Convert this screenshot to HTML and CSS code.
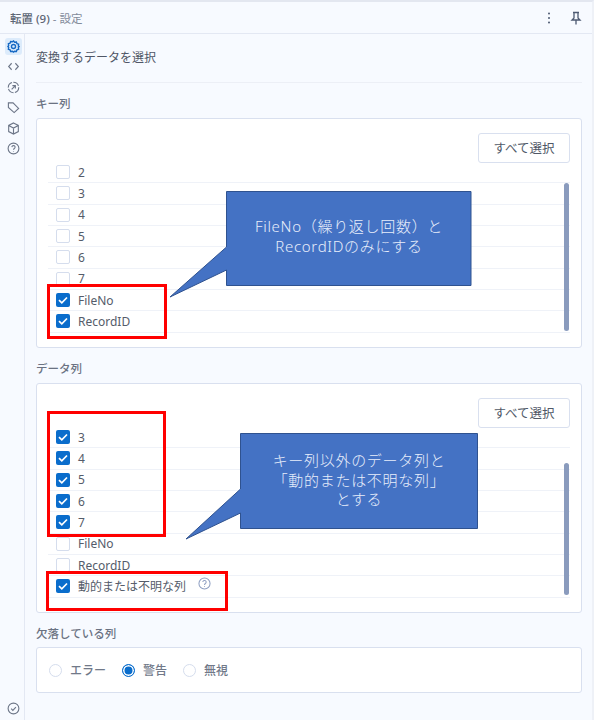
FILE: index.html
```html
<!DOCTYPE html>
<html lang="ja">
<head>
    <meta charset="UTF-8">
    <meta name="viewport" content="width=device-width, initial-scale=1.0">
    <title>転置 (9) - 設定</title>
    <link rel="stylesheet" href="styles.css">
</head>
<body>
    <div class="window">
        <header class="topbar">
            <div class="topbar-title"><span class="tool-name">転置 (9)</span> <span class="tool-sub">- 設定</span></div>
            <div class="topbar-actions">
                <svg class="icon" width="14" height="14" viewBox="0 0 14 14"><circle cx="7" cy="2.5" r="1"/><circle cx="7" cy="7" r="1"/><circle cx="7" cy="11.5" r="1"/></svg>
                <svg class="icon pin" width="14" height="14" viewBox="0 0 14 14"><path d="M4 1.5h6M5 1.5v5.5L3 9h8L9 7V1.5M7 9v4.5"/></svg>
            </div>
        </header>

        <div class="main">
            <nav class="rail">
                <div class="rail-top">
                    <span class="rail-item active">
                        <svg width="13" height="13" viewBox="0 0 14 14"><path d="M7 1l1.2 1.4 1.9-.3.6 1.8 1.8.6-.3 1.9L13 7l-.8 1.1.3 1.9-1.8.6-.6 1.8-1.9-.3L7 13l-1.2-.9-1.9.3-.6-1.8-1.8-.6.3-1.9L1 7l.8-1.1-.3-1.9 1.8-.6.6-1.8 1.9.3z"/><circle cx="7" cy="7" r="2.2"/></svg>
                    </span>
                    <span class="rail-item">
                        <svg width="13" height="13" viewBox="0 0 14 14"><path d="M5 3.5L1.8 7 5 10.500M9 3.500L12.200 7 9 10.500"/></svg>
                    </span>
                    <span class="rail-item">
                        <svg width="13" height="13" viewBox="0 0 14 14"><circle cx="7" cy="7" r="5.600" stroke-dasharray="7 1.500"/><path d="M5 9l4-4M5.800 5H9v3.200"/></svg>
                    </span>
                    <span class="rail-item">
                        <svg width="13" height="13" viewBox="0 0 14 14"><path d="M1.500 2h5l6 6-4.800 4.500L1.500 7z"/></svg>
                    </span>
                    <span class="rail-item">
                        <svg width="13" height="13" viewBox="0 0 14 14"><path d="M7 1l5.200 2.700v6.600L7 13l-5.200-2.700V3.700zM1.800 3.700L7 6.500l5.200-2.800M7 6.500V13"/></svg>
                    </span>
                    <span class="rail-item">
                        <svg width="13" height="13" viewBox="0 0 14 14"><circle cx="7" cy="7" r="5.800"/><path d="M5.300 5.500a1.700 1.700 0 1 1 2.600 1.500c-.6.400-.9.700-.9 1.400M7 10v.6"/></svg>
                    </span>
                </div>
                <span class="rail-item">
                    <svg width="13" height="13" viewBox="0 0 14 14"><circle cx="7" cy="7" r="5.800"/><path d="M4.500 7.200L6.300 9l3.300-3.600"/></svg>
                </span>
            </nav>

            <main class="content">
                <h1 class="page-title">変換するデータを選択</h1>

                <h2 class="section-label first">キー列</h2>
                <section class="panel">
                    <div class="panel-head"><button class="select-all">すべて選択</button></div>
                    <ul class="col-list">
                        <li class="col-row"><span class="check"></span>2</li>
                        <li class="col-row"><span class="check"></span>3</li>
                        <li class="col-row"><span class="check"></span>4</li>
                        <li class="col-row"><span class="check"></span>5</li>
                        <li class="col-row"><span class="check"></span>6</li>
                        <li class="col-row"><span class="check"></span>7</li>
                        <li class="col-row"><span class="check on"><svg width="14" height="14" viewBox="0 0 14 14"><path d="M3 7.200l2.800 2.600L11 4.500"/></svg></span>FileNo</li>
                        <li class="col-row"><span class="check on"><svg width="14" height="14" viewBox="0 0 14 14"><path d="M3 7.200l2.800 2.600L11 4.500"/></svg></span>RecordID</li>
                        <li class="scrollbar key-scroll"></li>
                    </ul>
                </section>

                <h2 class="section-label">データ列</h2>
                <section class="panel">
                    <div class="panel-head"><button class="select-all">すべて選択</button></div>
                    <ul class="col-list">
                        <li class="col-row"><span class="check on"><svg width="14" height="14" viewBox="0 0 14 14"><path d="M3 7.200l2.800 2.600L11 4.500"/></svg></span>3</li>
                        <li class="col-row"><span class="check on"><svg width="14" height="14" viewBox="0 0 14 14"><path d="M3 7.200l2.800 2.600L11 4.500"/></svg></span>4</li>
                        <li class="col-row"><span class="check on"><svg width="14" height="14" viewBox="0 0 14 14"><path d="M3 7.200l2.800 2.600L11 4.500"/></svg></span>5</li>
                        <li class="col-row"><span class="check on"><svg width="14" height="14" viewBox="0 0 14 14"><path d="M3 7.200l2.800 2.600L11 4.500"/></svg></span>6</li>
                        <li class="col-row"><span class="check on"><svg width="14" height="14" viewBox="0 0 14 14"><path d="M3 7.200l2.800 2.600L11 4.500"/></svg></span>7</li>
                        <li class="col-row"><span class="check"></span>FileNo</li>
                        <li class="col-row"><span class="check"></span>RecordID</li>
                        <li class="col-row"><span class="check on"><svg width="14" height="14" viewBox="0 0 14 14"><path d="M3 7.200l2.800 2.600L11 4.500"/></svg></span>動的または不明な列
                            <svg class="help" width="13" height="13" viewBox="0 0 14 14"><circle cx="7" cy="7" r="6"/><path d="M5.200 5.500a1.800 1.800 0 1 1 2.800 1.500c-.7.400-1 .8-1 1.500M7 10v.7"/></svg>
                        </li>
                        <li class="scrollbar data-scroll"></li>
                    </ul>
                </section>

                <h2 class="section-label missing">欠落している列</h2>
                <section class="panel radio-panel">
                    <label class="radio-item"><span class="radio"></span>エラー</label>
                    <label class="radio-item"><span class="radio on"></span>警告</label>
                    <label class="radio-item"><span class="radio"></span>無視</label>
                </section>
            </main>
        </div>

        <!-- annotations pasted over the screenshot -->
        <div class="red-box box-key"></div>
        <div class="red-box box-data"></div>
        <div class="red-box box-dynamic"></div>

        <svg class="callout-shape" width="594" height="720" viewBox="0 0 594 720">
            <path d="M226.500 191.500H471V285.500H226.500V270L170 297L226.500 247Z"/>
            <path d="M240.500 433.500H477.500V528.500H240.500V513L186 539L240.500 489Z"/>
        </svg>
        <div class="callout-text callout-key">FileNo（繰り返し回数）と<br>RecordIDのみにする</div>
        <div class="callout-text callout-data">キー列以外のデータ列と<br>「動的または不明な列」<br>とする</div>
    </div>
</body>
</html>
```

FILE: styles.css
```css
* {
    box-sizing: border-box;
}

body {
    margin: 0;
    background-color: #f7faff;
    font-family: "Noto Sans", "Noto Sans CJK JP", sans-serif;
    color: #525a6b;
}

.window {
    position: relative;
    width: 594px;
    height: 720px;
    overflow: hidden;
    border-top: 2px solid #e3e7f0;
    border-right: 2px solid #eef1f7;
    display: flex;
    flex-direction: column;
}

.topbar {
    height: 32px;
    flex: none;
    display: flex;
    align-items: center;
    justify-content: space-between;
    padding: 0 9px 0 10px;
    border-bottom: 1px solid #e3e8f3;
    font-size: 11.500px;
}

.tool-name {
    font-weight: 500;
    color: #5d6675;
}

.tool-sub {
    color: #838b9b;
}

.topbar-actions {
    display: flex;
    gap: 13px;
    align-items: center;
}

.icon {
    fill: #4d5a72;
}

.icon.pin {
    fill: none;
    stroke: #4d5a72;
    stroke-width: 1.300;
}

.main {
    flex: 1;
    display: flex;
    min-height: 0;
}

.rail {
    width: 25px;
    flex: none;
    border-right: 1px solid #e3e8f3;
    display: flex;
    flex-direction: column;
    align-items: center;
    justify-content: space-between;
    padding: 4px 0 3px 2px;
}

.rail-top {
    display: flex;
    flex-direction: column;
    gap: 4px;
}

.rail-item {
    width: 17px;
    height: 16.500px;
    display: flex;
    align-items: center;
    justify-content: center;
    border-radius: 3px;
}

.rail-item svg {
    fill: none;
    stroke: #6d7688;
    stroke-width: 1.200;
}

.rail-item.active {
    background-color: #dcebfb;
}

.rail-item.active svg {
    stroke: #1769c4;
    stroke-width: 1.500;
}

.content {
    flex: 1;
    min-width: 0;
    padding: 0 10px 0 11px;
}

.page-title {
    margin: 0;
    height: 49px;
    padding-top: 13px;
    border-bottom: 1px solid #eceff6;
    font-size: 12px;
    line-height: 22px;
    font-weight: 400;
    color: #4f5666;
}

.section-label {
    margin: 0;
    font-size: 11.500px;
    line-height: 16px;
    font-weight: 500;
    color: #6a7282;
    height: 35px;
    padding-top: 13px;
}

.section-label.first {
    height: 34.500px;
    padding-top: 13px;
}

.section-label.missing {
    height: 34.500px;
    padding-top: 13px;
}

.panel {
    background-color: #fff;
    border: 1px solid #d9e0ef;
    border-radius: 3px;
    height: 230px;
    padding: 14px 11px 0;
}

.panel-head {
    display: flex;
    justify-content: flex-end;
    height: 29.500px;
}

.select-all {
    width: 92px;
    height: 30px;
    padding: 0;
    background-color: #fff;
    border: 1px solid #d9e0ef;
    border-radius: 3px;
    font-family: inherit;
    font-size: 12.500px;
    color: #505867;
}

.col-list {
    position: relative;
    list-style: none;
    margin: 0;
    padding: 0;
}

.col-row {
    height: 21.330px;
    display: flex;
    align-items: center;
    padding-left: 8px;
    border-bottom: 1px solid #eff2f8;
    font-size: 12px;
    color: #555c6a;
}

.check {
    width: 14px;
    height: 14px;
    margin-right: 8px;
    flex: none;
    border: 1.500px solid #d5dded;
    border-radius: 2px;
    background-color: #fff;
}

.check.on {
    border: none;
    background-color: #0a6dcc;
}

.check svg {
    display: block;
    fill: none;
    stroke: #fff;
    stroke-width: 1.700;
}

.help {
    margin: -5px 0 0 12px;
    fill: none;
    stroke: #8f9fc2;
    stroke-width: 1.100;
}

.scrollbar {
    position: absolute;
    right: 1px;
    width: 5px;
    border-radius: 3px;
    background-color: #8a9bbd;
}

.key-scroll {
    top: 21px;
    height: 148px;
}

.data-scroll {
    top: 36px;
    height: 132px;
}

.radio-panel {
    height: 46px;
    padding: 0 0 0 11.500px;
    display: flex;
    align-items: center;
    gap: 15.500px;
}

.radio-item {
    display: flex;
    align-items: center;
    gap: 8.500px;
    font-size: 12px;
    font-weight: 500;
    color: #717989;
}

.radio {
    width: 13px;
    height: 13px;
    border: 1px solid #d5dded;
    border-radius: 50%;
    background-color: #fff;
}

.radio.on {
    border: 1.500px solid #0a6dcc;
    box-shadow: inset 0 0 0 1.500px #fff;
    background-color: #0a6dcc;
}

.red-box {
    position: absolute;
    border: 3px solid #ff0000;
}

.box-key {
    left: 47px;
    top: 282px;
    width: 120px;
    height: 55px;
}

.box-data {
    left: 47px;
    top: 409px;
    width: 119px;
    height: 126px;
}

.box-dynamic {
    left: 46px;
    top: 569px;
    width: 182px;
    height: 40px;
}

.callout-shape {
    position: absolute;
    left: 0;
    top: -2px;
    fill: #4472c4;
    stroke: #2f528f;
    stroke-width: 1;
}

.callout-text {
    position: absolute;
    text-align: center;
    color: #e8eefb;
    font-size: 15px;
    line-height: 19.500px;
    letter-spacing: 0.7px;
    font-weight: 300;
}

.callout-key {
    left: 227px;
    top: 215px;
    width: 244px;
}

.callout-data {
    left: 241px;
    top: 449px;
    width: 236px;
}
```
